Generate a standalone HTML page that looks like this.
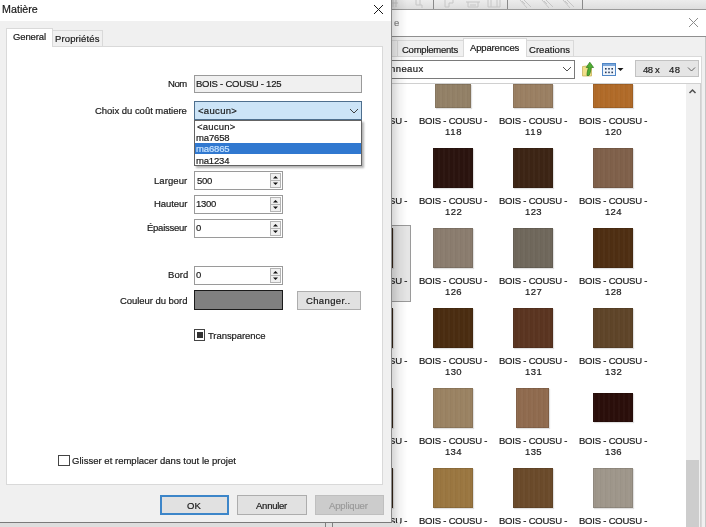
<!DOCTYPE html>
<html><head><meta charset="utf-8">
<style>
*{margin:0;padding:0;box-sizing:border-box}
html,body{width:706px;height:527px;overflow:hidden;background:#fff;font-family:"Liberation Sans",sans-serif;color:#1a1a1a}
.a{position:absolute}
.t{position:absolute;white-space:nowrap;line-height:1;will-change:transform;-webkit-text-stroke:.2px currentColor}
.thumb{position:absolute;box-shadow:inset 0 0 0 1px rgba(0,0,0,.1),1px 1px 1px rgba(0,0,0,.12)}
</style></head><body>
<div class="a" style="left:380px;top:0px;width:326px;height:9px;background:linear-gradient(#ececec,#dedede)"></div>
<div class="a" style="left:380px;top:9px;width:326px;height:1px;background:#9a9a9a"></div>
<div class="a" style="left:433px;top:0px;width:1px;height:9px;background:#8a8a8a"></div>
<div class="a" style="left:507px;top:0px;width:1px;height:9px;background:#8a8a8a"></div>
<div class="a" style="left:582px;top:0px;width:1px;height:9px;background:#8a8a8a"></div>
<svg class="a" style="left:390px;top:0" width="316" height="9" viewBox="0 0 316 9" fill="none" stroke="#c6c6c6" stroke-width="1">
 <path d="M3 0v7M0 3h8M6 0v7"/>
 <path d="M26 0v5h6v3M30 0v5"/>
 <path d="M55 0v7h4V3h4V0"/>
 <path d="M76 2h14M78 2v5h10V2M80 5h6"/>
 <path d="M98 0v7h12V0M101 0v7M107 0v7"/>
 <path d="M130 0l7 8M134 0l7 7M132 1l3 3"/>
 <path d="M152 0l7 8M156 0l7 7M154 1l3 3"/>
 <path d="M173 0l7 8M177 0l7 7M175 1l3 3"/>
</svg>
<div class="t" style="left:393.60px;top:17.77px;font-size:9.5px;color:#8a8a8a">e</div>
<svg class="a" style="left:688px;top:17px" width="11" height="11" viewBox="0 0 11 11"><path d="M1 1L10 10M10 1L1 10" stroke="#8c8c8c" stroke-width="1"/></svg>
<div class="a" style="left:380px;top:36px;width:326px;height:1px;background:#8f8f8f"></div>
<div class="a" style="left:380px;top:37px;width:326px;height:490px;background:#f0f0f0"></div>
<div class="a" style="left:705px;top:37px;width:1px;height:490px;background:#c8c8c8"></div>
<div class="a" style="left:380px;top:40px;width:18px;height:17px;background:#f0f0f0;border:1px solid #d9d9d9"></div>
<div class="a" style="left:397px;top:40px;width:67px;height:17px;background:#f0f0f0;border:1px solid #d9d9d9"></div>
<div class="t" style="left:402.32px;top:44.77px;font-size:9.5px;letter-spacing:-0.239px">Complements</div>
<div class="a" style="left:526px;top:40px;width:48px;height:17px;background:#f0f0f0;border:1px solid #d9d9d9"></div>
<div class="t" style="left:529.23px;top:44.77px;font-size:9.5px;letter-spacing:0.045px">Creations</div>
<div class="a" style="left:380px;top:56px;width:322px;height:471px;background:#fff;border-right:1px solid #d9d9d9;border-top:1px solid #d9d9d9"></div>
<div class="a" style="left:463px;top:38px;width:64px;height:19px;background:#fff;border:1px solid #d9d9d9;border-bottom:none"></div>
<div class="t" style="left:469.88px;top:42.77px;font-size:9.5px;letter-spacing:-0.149px">Apparences</div>
<div class="a" style="left:370px;top:60px;width:205px;height:19px;background:#fff;border:1px solid #7a7a7a"></div>
<div class="t" style="left:389.87px;top:63.77px;font-size:9.5px;letter-spacing:0.410px">nneaux</div>
<svg class="a" style="left:562px;top:66px" width="10" height="6" viewBox="0 0 10 6"><path d="M1 1L5 5L9 1" stroke="#505050" fill="none" stroke-width="1"/></svg>
<svg class="a" style="left:581px;top:61px" width="14" height="16" viewBox="0 0 14 16">
 <path d="M1.5 5.5L6 5L10.5 7V15H1.5z" fill="#f1df8a" stroke="#c9b25e" stroke-width=".8"/>
 <path d="M6 14.5C6 11 6.8 8.5 7.6 6.5H5.2L8.8 1.2L12.6 6.5H10.2C9.8 9.5 9.2 12.5 8 14.5z" fill="#4fae33" stroke="#2c7a1c" stroke-width=".7"/>
</svg>
<svg class="a" style="left:602px;top:63px" width="23" height="13" viewBox="0 0 23 13">
 <rect x="0.5" y="0.5" width="13" height="12" fill="#eef4fb" stroke="#4f86c6"/>
 <rect x="1" y="1" width="12" height="2" fill="#7aa6da"/>
 <g fill="#2d3f5e"><rect x="3" y="5" width="1.6" height="1.6"/><rect x="6.2" y="5" width="1.6" height="1.6"/><rect x="9.4" y="5" width="1.6" height="1.6"/><rect x="3" y="8.6" width="1.6" height="1.6"/><rect x="6.2" y="8.6" width="1.6" height="1.6"/><rect x="9.4" y="8.6" width="1.6" height="1.6"/></g>
 <path d="M15.5 5h6l-3 3z" fill="#1a1a1a"/>
</svg>
<div class="a" style="left:635px;top:60px;width:64px;height:17px;background:#e5e5e5;border:1px solid #c2c2c2"></div>
<div class="t" style="left:643.09px;top:64.77px;font-size:9.5px;letter-spacing:-0.446px;color:#222">48</div>
<div class="t" style="left:655.40px;top:64.77px;font-size:9.5px;color:#222">x</div>
<div class="t" style="left:669.49px;top:64.77px;font-size:9.5px;letter-spacing:0.554px;color:#222">48</div>
<svg class="a" style="left:687px;top:66px" width="10" height="6" viewBox="0 0 10 6"><path d="M1 1.5L4.5 5L8 1.5" stroke="#606060" fill="none" stroke-width="1"/></svg>
<div class="a" style="left:380px;top:83px;width:321px;height:444px;background:#fff;border-top:1px solid #d0d0d0;border-right:1px solid #d0d0d0"></div>
<div class="a" style="left:686px;top:84px;width:14px;height:443px;background:#f0f0f0"></div>
<div class="a" style="left:686px;top:460px;width:13px;height:67px;background:#cdcdcd"></div>
<svg class="a" style="left:688px;top:88px" width="9" height="6" viewBox="0 0 9 6"><path d="M1.5 5L4.5 2L7.5 5" stroke="#505050" fill="none" stroke-width="1.5"/></svg>
<div class="a" style="left:336px;top:225px;width:75px;height:77px;background:#e5e5e5;border:1px solid #9a9a9a"></div>
<div class="thumb" style="left:353px;top:84px;width:36px;height:24px;background:repeating-linear-gradient(90deg,rgba(255,255,255,.025) 0 2px,rgba(0,0,0,.025) 2px 3px,rgba(255,255,255,0) 3px 5px),#6a5a4a"></div>
<div class="t" style="left:338.57px;top:115.77px;font-size:9.5px;letter-spacing:-0.213px">BOIS - COUSU -</div>
<div class="t" style="left:364.53px;top:126.77px;font-size:9.5px;letter-spacing:0.777px">117</div>
<div class="thumb" style="left:435px;top:84px;width:36px;height:24px;background:repeating-linear-gradient(90deg,rgba(255,255,255,.025) 0 2px,rgba(0,0,0,.025) 2px 3px,rgba(255,255,255,0) 3px 5px),#928066"></div>
<div class="t" style="left:418.57px;top:115.77px;font-size:9.5px;letter-spacing:-0.213px">BOIS - COUSU -</div>
<div class="t" style="left:444.53px;top:126.77px;font-size:9.5px;letter-spacing:0.744px">118</div>
<div class="thumb" style="left:513px;top:84px;width:40px;height:24px;background:repeating-linear-gradient(90deg,rgba(255,255,255,.025) 0 2px,rgba(0,0,0,.025) 2px 3px,rgba(255,255,255,0) 3px 5px),#9a7f62"></div>
<div class="t" style="left:498.57px;top:115.77px;font-size:9.5px;letter-spacing:-0.213px">BOIS - COUSU -</div>
<div class="t" style="left:524.53px;top:126.77px;font-size:9.5px;letter-spacing:0.763px">119</div>
<div class="thumb" style="left:593px;top:84px;width:40px;height:24px;background:repeating-linear-gradient(90deg,rgba(255,255,255,.025) 0 2px,rgba(0,0,0,.025) 2px 3px,rgba(255,255,255,0) 3px 5px),#b06a28"></div>
<div class="t" style="left:578.57px;top:115.77px;font-size:9.5px;letter-spacing:-0.213px">BOIS - COUSU -</div>
<div class="t" style="left:604.53px;top:126.77px;font-size:9.5px;letter-spacing:0.369px">120</div>
<div class="thumb" style="left:353px;top:148px;width:36px;height:40px;background:repeating-linear-gradient(90deg,rgba(255,255,255,.025) 0 2px,rgba(0,0,0,.025) 2px 3px,rgba(255,255,255,0) 3px 5px),#5a4030"></div>
<div class="t" style="left:338.57px;top:195.77px;font-size:9.5px;letter-spacing:-0.213px">BOIS - COUSU -</div>
<div class="t" style="left:364.53px;top:206.77px;font-size:9.5px;letter-spacing:0.416px">121</div>
<div class="thumb" style="left:433px;top:148px;width:40px;height:40px;background:repeating-linear-gradient(90deg,rgba(255,255,255,.025) 0 2px,rgba(0,0,0,.025) 2px 3px,rgba(255,255,255,0) 3px 5px),#2a130e"></div>
<div class="t" style="left:418.57px;top:195.77px;font-size:9.5px;letter-spacing:-0.213px">BOIS - COUSU -</div>
<div class="t" style="left:444.53px;top:206.77px;font-size:9.5px;letter-spacing:0.425px">122</div>
<div class="thumb" style="left:513px;top:148px;width:40px;height:40px;background:repeating-linear-gradient(90deg,rgba(255,255,255,.025) 0 2px,rgba(0,0,0,.025) 2px 3px,rgba(255,255,255,0) 3px 5px),#3c2414"></div>
<div class="t" style="left:498.57px;top:195.77px;font-size:9.5px;letter-spacing:-0.213px">BOIS - COUSU -</div>
<div class="t" style="left:524.53px;top:206.77px;font-size:9.5px;letter-spacing:0.392px">123</div>
<div class="thumb" style="left:593px;top:148px;width:40px;height:40px;background:repeating-linear-gradient(90deg,rgba(255,255,255,.025) 0 2px,rgba(0,0,0,.025) 2px 3px,rgba(255,255,255,0) 3px 5px),#7f604a"></div>
<div class="t" style="left:578.57px;top:195.77px;font-size:9.5px;letter-spacing:-0.213px">BOIS - COUSU -</div>
<div class="t" style="left:604.53px;top:206.77px;font-size:9.5px;letter-spacing:0.326px">124</div>
<div class="thumb" style="left:353px;top:228px;width:40px;height:40px;background:repeating-linear-gradient(90deg,rgba(255,255,255,.025) 0 2px,rgba(0,0,0,.025) 2px 3px,rgba(255,255,255,0) 3px 5px),#3a2a1a"></div>
<div class="t" style="left:338.57px;top:275.77px;font-size:9.5px;letter-spacing:-0.213px">BOIS - COUSU -</div>
<div class="t" style="left:364.53px;top:286.77px;font-size:9.5px;letter-spacing:0.383px">125</div>
<div class="thumb" style="left:433px;top:228px;width:40px;height:40px;background:repeating-linear-gradient(90deg,rgba(255,255,255,.025) 0 2px,rgba(0,0,0,.025) 2px 3px,rgba(255,255,255,0) 3px 5px),#8a7c6e"></div>
<div class="t" style="left:418.57px;top:275.77px;font-size:9.5px;letter-spacing:-0.213px">BOIS - COUSU -</div>
<div class="t" style="left:444.53px;top:286.77px;font-size:9.5px;letter-spacing:0.392px">126</div>
<div class="thumb" style="left:513px;top:228px;width:40px;height:40px;background:repeating-linear-gradient(90deg,rgba(255,255,255,.025) 0 2px,rgba(0,0,0,.025) 2px 3px,rgba(255,255,255,0) 3px 5px),#6f675b"></div>
<div class="t" style="left:498.57px;top:275.77px;font-size:9.5px;letter-spacing:-0.213px">BOIS - COUSU -</div>
<div class="t" style="left:524.53px;top:286.77px;font-size:9.5px;letter-spacing:0.425px">127</div>
<div class="thumb" style="left:593px;top:228px;width:40px;height:40px;background:repeating-linear-gradient(90deg,rgba(255,255,255,.025) 0 2px,rgba(0,0,0,.025) 2px 3px,rgba(255,255,255,0) 3px 5px),#4e2e12"></div>
<div class="t" style="left:578.57px;top:275.77px;font-size:9.5px;letter-spacing:-0.213px">BOIS - COUSU -</div>
<div class="t" style="left:604.53px;top:286.77px;font-size:9.5px;letter-spacing:0.392px">128</div>
<div class="thumb" style="left:353px;top:308px;width:40px;height:40px;background:repeating-linear-gradient(90deg,rgba(255,255,255,.025) 0 2px,rgba(0,0,0,.025) 2px 3px,rgba(255,255,255,0) 3px 5px),#3a2a1a"></div>
<div class="t" style="left:338.57px;top:355.77px;font-size:9.5px;letter-spacing:-0.213px">BOIS - COUSU -</div>
<div class="t" style="left:364.53px;top:366.77px;font-size:9.5px;letter-spacing:0.411px">129</div>
<div class="thumb" style="left:433px;top:308px;width:40px;height:40px;background:repeating-linear-gradient(90deg,rgba(255,255,255,.025) 0 2px,rgba(0,0,0,.025) 2px 3px,rgba(255,255,255,0) 3px 5px),#4a2c10"></div>
<div class="t" style="left:418.57px;top:355.77px;font-size:9.5px;letter-spacing:-0.213px">BOIS - COUSU -</div>
<div class="t" style="left:444.53px;top:366.77px;font-size:9.5px;letter-spacing:0.369px">130</div>
<div class="thumb" style="left:513px;top:308px;width:40px;height:40px;background:repeating-linear-gradient(90deg,rgba(255,255,255,.025) 0 2px,rgba(0,0,0,.025) 2px 3px,rgba(255,255,255,0) 3px 5px),#5a3420"></div>
<div class="t" style="left:498.57px;top:355.77px;font-size:9.5px;letter-spacing:-0.213px">BOIS - COUSU -</div>
<div class="t" style="left:524.53px;top:366.77px;font-size:9.5px;letter-spacing:0.416px">131</div>
<div class="thumb" style="left:593px;top:308px;width:40px;height:40px;background:repeating-linear-gradient(90deg,rgba(255,255,255,.025) 0 2px,rgba(0,0,0,.025) 2px 3px,rgba(255,255,255,0) 3px 5px),#5e4428"></div>
<div class="t" style="left:578.57px;top:355.77px;font-size:9.5px;letter-spacing:-0.213px">BOIS - COUSU -</div>
<div class="t" style="left:604.53px;top:366.77px;font-size:9.5px;letter-spacing:0.425px">132</div>
<div class="thumb" style="left:353px;top:388px;width:40px;height:40px;background:repeating-linear-gradient(90deg,rgba(255,255,255,.025) 0 2px,rgba(0,0,0,.025) 2px 3px,rgba(255,255,255,0) 3px 5px),#3a2a1a"></div>
<div class="t" style="left:338.57px;top:435.77px;font-size:9.5px;letter-spacing:-0.213px">BOIS - COUSU -</div>
<div class="t" style="left:364.53px;top:446.77px;font-size:9.5px;letter-spacing:0.392px">133</div>
<div class="thumb" style="left:433px;top:388px;width:40px;height:40px;background:repeating-linear-gradient(90deg,rgba(255,255,255,.025) 0 2px,rgba(0,0,0,.025) 2px 3px,rgba(255,255,255,0) 3px 5px),#9a8262"></div>
<div class="t" style="left:418.57px;top:435.77px;font-size:9.5px;letter-spacing:-0.213px">BOIS - COUSU -</div>
<div class="t" style="left:444.53px;top:446.77px;font-size:9.5px;letter-spacing:0.326px">134</div>
<div class="thumb" style="left:516px;top:388px;width:33px;height:40px;background:repeating-linear-gradient(90deg,rgba(255,255,255,.025) 0 2px,rgba(0,0,0,.025) 2px 3px,rgba(255,255,255,0) 3px 5px),#8f6a4e"></div>
<div class="t" style="left:498.57px;top:435.77px;font-size:9.5px;letter-spacing:-0.213px">BOIS - COUSU -</div>
<div class="t" style="left:524.53px;top:446.77px;font-size:9.5px;letter-spacing:0.383px">135</div>
<div class="thumb" style="left:593px;top:393px;width:40px;height:29px;background:repeating-linear-gradient(90deg,rgba(255,255,255,.025) 0 2px,rgba(0,0,0,.025) 2px 3px,rgba(255,255,255,0) 3px 5px),#2a0e0a"></div>
<div class="t" style="left:578.57px;top:435.77px;font-size:9.5px;letter-spacing:-0.213px">BOIS - COUSU -</div>
<div class="t" style="left:604.53px;top:446.77px;font-size:9.5px;letter-spacing:0.392px">136</div>
<div class="thumb" style="left:353px;top:468px;width:40px;height:40px;background:repeating-linear-gradient(90deg,rgba(255,255,255,.025) 0 2px,rgba(0,0,0,.025) 2px 3px,rgba(255,255,255,0) 3px 5px),#3a2a1a"></div>
<div class="t" style="left:338.57px;top:515.77px;font-size:9.5px;letter-spacing:-0.213px">BOIS - COUSU -</div>
<div class="t" style="left:364.53px;top:526.77px;font-size:9.5px;letter-spacing:0.425px">137</div>
<div class="thumb" style="left:433px;top:468px;width:40px;height:40px;background:repeating-linear-gradient(90deg,rgba(255,255,255,.025) 0 2px,rgba(0,0,0,.025) 2px 3px,rgba(255,255,255,0) 3px 5px),#9a7640"></div>
<div class="t" style="left:418.57px;top:515.77px;font-size:9.5px;letter-spacing:-0.213px">BOIS - COUSU -</div>
<div class="t" style="left:444.53px;top:526.77px;font-size:9.5px;letter-spacing:0.392px">138</div>
<div class="thumb" style="left:513px;top:468px;width:40px;height:40px;background:repeating-linear-gradient(90deg,rgba(255,255,255,.025) 0 2px,rgba(0,0,0,.025) 2px 3px,rgba(255,255,255,0) 3px 5px),#6a4a2a"></div>
<div class="t" style="left:498.57px;top:515.77px;font-size:9.5px;letter-spacing:-0.213px">BOIS - COUSU -</div>
<div class="t" style="left:524.53px;top:526.77px;font-size:9.5px;letter-spacing:0.411px">139</div>
<div class="thumb" style="left:593px;top:468px;width:40px;height:40px;background:repeating-linear-gradient(90deg,rgba(255,255,255,.025) 0 2px,rgba(0,0,0,.025) 2px 3px,rgba(255,255,255,0) 3px 5px),#9e968a"></div>
<div class="t" style="left:578.57px;top:515.77px;font-size:9.5px;letter-spacing:-0.213px">BOIS - COUSU -</div>
<div class="t" style="left:604.53px;top:526.77px;font-size:9.5px;letter-spacing:0.369px">140</div>
<div class="a" style="left:392px;top:0px;width:15px;height:527px;background:linear-gradient(90deg,rgba(0,0,0,.16),rgba(0,0,0,.05) 50%,rgba(0,0,0,0))"></div>
<div class="a" style="left:0px;top:523px;width:400px;height:4px;background:#dedede"></div>
<div class="a" style="left:325px;top:523px;width:1px;height:4px;background:#808080"></div>
<div class="a" style="left:332px;top:523px;width:1px;height:4px;background:#808080"></div>
<div class="a" style="left:0px;top:0px;width:392px;height:523px;background:#f0f0f0;border-right:1px solid #8a8a8a;border-bottom:1px solid #7a7a7a"></div>
<div class="a" style="left:0px;top:0px;width:391px;height:21px;background:#fff"></div>
<div class="t" style="left:1.62px;top:3.67px;font-size:10.7px;letter-spacing:0.029px">Matière</div>
<svg class="a" style="left:373px;top:4px" width="11" height="11" viewBox="0 0 11 11"><path d="M1 1L10 10M10 1L1 10" stroke="#1a1a1a" stroke-width="1"/></svg>
<div class="a" style="left:52px;top:30px;width:51px;height:17px;background:#f0f0f0;border:1px solid #d9d9d9;border-bottom:none"></div>
<div class="t" style="left:55.12px;top:33.77px;font-size:9.5px;letter-spacing:0.124px">Propriétés</div>
<div class="a" style="left:6px;top:46px;width:377px;height:439px;background:#fff;border:1px solid #d9d9d9"></div>
<div class="a" style="left:6px;top:28px;width:47px;height:19px;background:#fff;border:1px solid #d9d9d9;border-bottom:none"></div>
<div class="t" style="left:12.72px;top:31.77px;font-size:9.5px;letter-spacing:-0.115px">General</div>
<div class="t" style="left:168.42px;top:78.77px;font-size:9.5px;letter-spacing:-0.429px">Nom</div>
<div class="a" style="left:194px;top:75px;width:168px;height:18px;background:#f0f0f0;border:1px solid #9a9a9a"></div>
<div class="t" style="left:195.62px;top:78.77px;font-size:9.5px;letter-spacing:-0.252px">BOIS - COUSU - 125</div>
<div class="t" style="left:95.43px;top:105.77px;font-size:9.5px;letter-spacing:-0.026px">Choix du coût matiere</div>
<div class="a" style="left:194px;top:101px;width:168px;height:19px;background:#cce4f7;border:1px solid #4e6f8e"></div>
<div class="t" style="left:198.03px;top:105.77px;font-size:9.5px;letter-spacing:0.323px">&lt;aucun&gt;</div>
<svg class="a" style="left:349px;top:108px" width="10" height="6" viewBox="0 0 10 6"><path d="M1 1L5 5L9 1" stroke="#404040" fill="none" stroke-width="1"/></svg>
<div class="a" style="left:194px;top:120px;width:168px;height:46px;background:#fff;border:1px solid #646464;box-shadow:2px 2px 2px rgba(0,0,0,.3)"></div>
<div class="a" style="left:195px;top:143px;width:166px;height:11px;background:#3078d0"></div>
<div class="t" style="left:197.13px;top:121.77px;font-size:9.5px;letter-spacing:0.223px">&lt;aucun&gt;</div>
<div class="t" style="left:195.97px;top:132.77px;font-size:9.5px;letter-spacing:-0.140px">ma7658</div>
<div class="t" style="left:195.97px;top:143.77px;font-size:9.5px;letter-spacing:-0.143px;color:#c8e4ff">ma6865</div>
<div class="t" style="left:195.97px;top:155.77px;font-size:9.5px;letter-spacing:-0.166px">ma1234</div>
<div class="t" style="left:153.62px;top:175.77px;font-size:9.5px;letter-spacing:0.081px">Largeur</div>
<div class="a" style="left:194px;top:171px;width:89px;height:19px;background:#fff;border:1px solid #9a9a9a"></div>
<div class="t" style="left:196.82px;top:175.77px;font-size:9.5px;letter-spacing:-0.252px">500</div>
<div class="t" style="left:153.72px;top:198.77px;font-size:9.5px;letter-spacing:-0.062px">Hauteur</div>
<div class="a" style="left:194px;top:195px;width:89px;height:19px;background:#fff;border:1px solid #9a9a9a"></div>
<div class="t" style="left:196.48px;top:198.77px;font-size:9.5px;letter-spacing:-0.282px">1300</div>
<div class="t" style="left:147.22px;top:222.77px;font-size:9.5px;letter-spacing:-0.252px">Épaisseur</div>
<div class="a" style="left:194px;top:219px;width:89px;height:19px;background:#fff;border:1px solid #9a9a9a"></div>
<div class="t" style="left:196.13px;top:222.77px;font-size:9.5px">0</div>
<div class="t" style="left:167.62px;top:269.77px;font-size:9.5px;letter-spacing:0.041px">Bord</div>
<div class="a" style="left:194px;top:266px;width:89px;height:19px;background:#fff;border:1px solid #9a9a9a"></div>
<div class="t" style="left:196.13px;top:269.77px;font-size:9.5px">0</div>
<div class="a" style="left:270px;top:173px;width:11px;height:15px;background:#f0f0f0;border:1px solid #b4b4b4"></div>
<div class="a" style="left:270px;top:180px;width:11px;height:1px;background:#b4b4b4"></div>
<svg class="a" style="left:272px;top:175px" width="7" height="11" viewBox="0 0 7 11"><path d="M1 3.5L3.5 1L6 3.5z" fill="#111"/><path d="M1 7.5L6 7.5L3.5 10z" fill="#111"/></svg>
<div class="a" style="left:270px;top:197px;width:11px;height:15px;background:#f0f0f0;border:1px solid #b4b4b4"></div>
<div class="a" style="left:270px;top:204px;width:11px;height:1px;background:#b4b4b4"></div>
<svg class="a" style="left:272px;top:199px" width="7" height="11" viewBox="0 0 7 11"><path d="M1 3.5L3.5 1L6 3.5z" fill="#111"/><path d="M1 7.5L6 7.5L3.5 10z" fill="#111"/></svg>
<div class="a" style="left:270px;top:221px;width:11px;height:15px;background:#f0f0f0;border:1px solid #b4b4b4"></div>
<div class="a" style="left:270px;top:228px;width:11px;height:1px;background:#b4b4b4"></div>
<svg class="a" style="left:272px;top:223px" width="7" height="11" viewBox="0 0 7 11"><path d="M1 3.5L3.5 1L6 3.5z" fill="#111"/><path d="M1 7.5L6 7.5L3.5 10z" fill="#111"/></svg>
<div class="a" style="left:270px;top:268px;width:11px;height:15px;background:#f0f0f0;border:1px solid #b4b4b4"></div>
<div class="a" style="left:270px;top:275px;width:11px;height:1px;background:#b4b4b4"></div>
<svg class="a" style="left:272px;top:270px" width="7" height="11" viewBox="0 0 7 11"><path d="M1 3.5L3.5 1L6 3.5z" fill="#111"/><path d="M1 7.5L6 7.5L3.5 10z" fill="#111"/></svg>
<div class="t" style="left:120.32px;top:295.77px;font-size:9.5px;letter-spacing:-0.046px">Couleur du bord</div>
<div class="a" style="left:194px;top:290px;width:89px;height:20px;background:#808080;border:1px solid #1a1a1a"></div>
<div class="a" style="left:297px;top:291px;width:64px;height:19px;background:#e1e1e1;border:1px solid #adadad"></div>
<div class="t" style="left:306.22px;top:295.77px;font-size:9.5px;letter-spacing:0.355px">Changer..</div>
<div class="a" style="left:194px;top:329px;width:11px;height:12px;background:#fff;border:1px solid #444"></div>
<div class="a" style="left:196.5px;top:332px;width:6px;height:6px;background:#333"></div>
<div class="t" style="left:208.19px;top:330.77px;font-size:9.5px;letter-spacing:-0.076px">Transparence</div>
<div class="a" style="left:58px;top:455px;width:12px;height:11px;background:#fff;border:1px solid #444"></div>
<div class="t" style="left:71.73px;top:455.77px;font-size:9.5px;letter-spacing:0.017px">Glisser et remplacer dans tout le projet</div>
<div class="a" style="left:160px;top:495px;width:69px;height:20px;background:#e1e1e1;border:2px solid #3d86c9"></div>
<div class="t" style="left:187.25px;top:500.77px;font-size:9.5px">OK</div>
<div class="a" style="left:237px;top:495px;width:70px;height:20px;background:#e1e1e1;border:1px solid #adadad"></div>
<div class="t" style="left:255.68px;top:500.77px;font-size:9.5px;letter-spacing:-0.246px">Annuler</div>
<div class="a" style="left:315px;top:495px;width:69px;height:20px;background:#cccccc;border:1px solid #bfbfbf"></div>
<div class="t" style="left:328.88px;top:500.77px;font-size:9.5px;letter-spacing:-0.158px;color:#9a9a9a">Appliquer</div>
</body></html>
